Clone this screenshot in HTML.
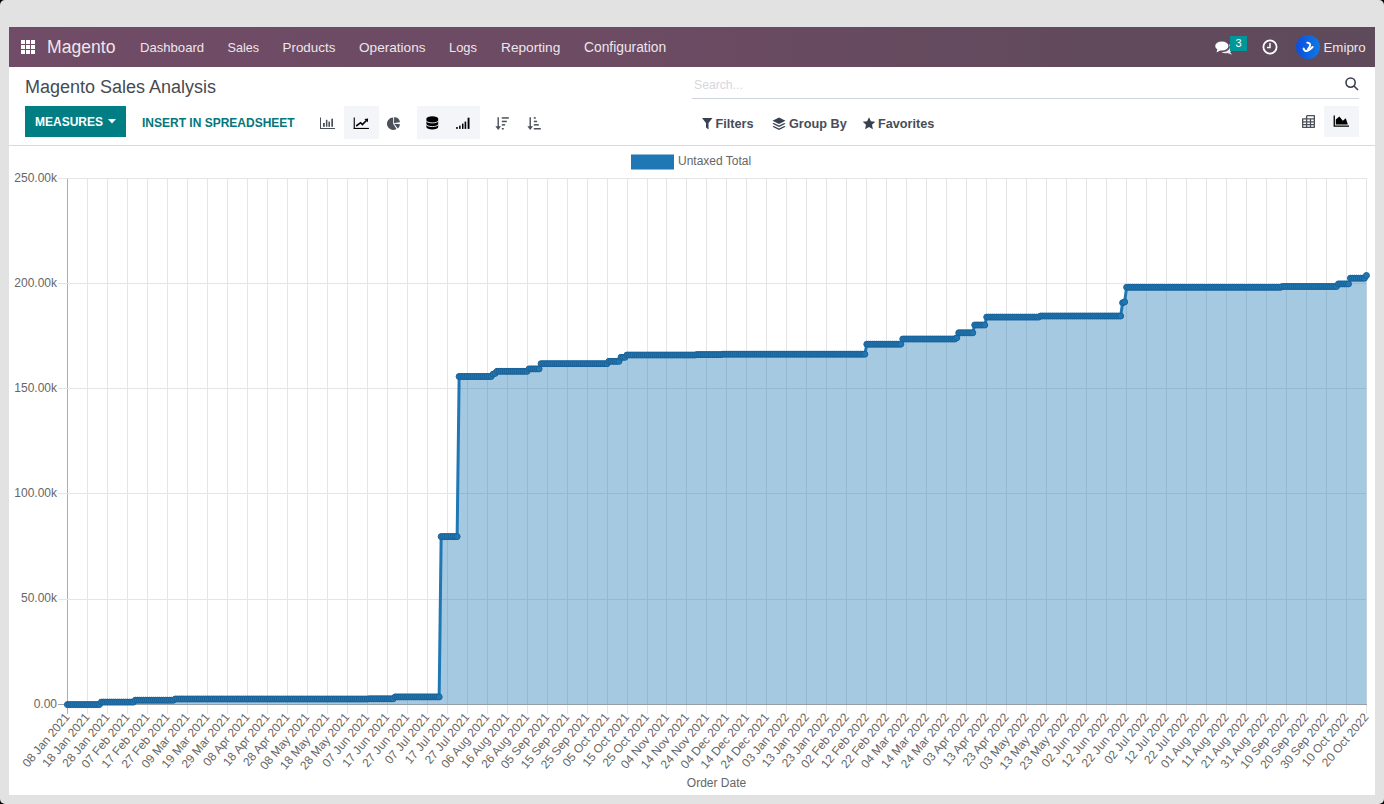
<!DOCTYPE html>
<html><head><meta charset="utf-8">
<style>
*{box-sizing:border-box;margin:0;padding:0}
html,body{width:1384px;height:804px;overflow:hidden;background:#000;font-family:"Liberation Sans",sans-serif}
.abs{position:absolute}
#screen{position:absolute;left:9px;top:27px;width:1366px;height:768px;background:#fff;overflow:hidden}
#nav{position:absolute;left:9px;top:27px;width:1366px;height:40px;background:linear-gradient(90deg,#714b67 0%,#6c4b63 45%,#614a5c 80%,#5f4a5b 100%)}
.nv{position:absolute;top:41px;color:#ede6eb;font-size:13.5px;line-height:14px;white-space:nowrap}
.chart{position:absolute;left:0;top:0}
.tk{font-family:"Liberation Sans",sans-serif;font-size:12px;fill:#666}
.fb{position:absolute;margin-top:1px;font-size:12.7px;line-height:13px;font-weight:bold;color:#484d56;white-space:nowrap}
.corner{position:absolute;width:0;height:0}
</style></head><body>
<div id="frame" style="position:absolute;left:0;top:0;width:1384px;height:804px;background:#e2e2e2;border-radius:5px"></div>
<div id="screen"></div>
<div id="nav"></div>
<!-- grid icon -->
<svg class="abs" style="left:21px;top:40px" width="14" height="14" viewBox="0 0 14 14"><g fill="#fff">
<rect x="0" y="0" width="4" height="4"/><rect x="5" y="0" width="4" height="4"/><rect x="10" y="0" width="4" height="4"/>
<rect x="0" y="5" width="4" height="4"/><rect x="5" y="5" width="4" height="4"/><rect x="10" y="5" width="4" height="4"/>
<rect x="0" y="10" width="4" height="4"/><rect x="5" y="10" width="4" height="4"/><rect x="10" y="10" width="4" height="4"/>
</g></svg>
<div class="nv" style="left:47px;top:38.3px;font-size:17.6px;line-height:18px">Magento</div>
<div class="nv" style="left:140px;font-size:13.1px">Dashboard</div>
<div class="nv" style="left:227.5px;font-size:12.6px">Sales</div>
<div class="nv" style="left:282.5px;font-size:13.4px">Products</div>
<div class="nv" style="left:359px;font-size:13.6px">Operations</div>
<div class="nv" style="left:449px;font-size:12.9px">Logs</div>
<div class="nv" style="left:501px;font-size:13.7px">Reporting</div>
<div class="nv" style="left:584px;font-size:13.8px">Configuration</div>
<div class="nv" style="left:1323.5px;font-size:13.3px">Emipro</div>

<div class="abs" style="left:25px;top:77px;font-size:18px;line-height:20px;color:#464a53">Magento Sales Analysis</div>
<div class="abs" style="left:25px;top:106px;width:101px;height:31px;background:#017e84"></div>
<div class="abs" style="left:35px;top:116px;font-size:12px;line-height:12px;font-weight:bold;color:#fff">MEASURES</div>
<div class="abs" style="left:142px;top:117px;font-size:12px;line-height:12px;font-weight:bold;color:#04767c">INSERT IN SPREADSHEET</div>
<div class="abs" style="left:9px;top:145px;width:1366px;height:1px;background:#d8dadd"></div>

<!-- measures caret -->
<svg class="abs" style="left:108px;top:119px" width="8" height="5" viewBox="0 0 8 5"><path d="M0 0 L8 0 L4 4.5 Z" fill="#fff"/></svg>
<!-- graph type icons -->
<div class="abs" style="left:344px;top:106px;width:35px;height:33px;background:#f4f5f8"></div>
<div class="abs" style="left:417px;top:106px;width:63px;height:33px;background:#f4f5f8"></div>
<svg class="abs" style="left:319px;top:117px" width="17" height="13" viewBox="0 0 17 13"><g fill="#4b5059">
<rect x="1" y="0.5" width="1" height="11.5"/><rect x="1" y="11" width="15" height="1"/>
<rect x="4" y="6" width="1.8" height="3.8"/><rect x="6.9" y="2.8" width="1.5" height="7"/><rect x="9.4" y="4.6" width="1.6" height="5.2"/><rect x="12.3" y="1.7" width="1.7" height="8.1"/>
</g></svg>
<svg class="abs" style="left:353px;top:117px" width="17" height="13" viewBox="0 0 17 13"><g fill="#000">
<rect x="0.7" y="0.5" width="1.1" height="11.4"/><rect x="0.7" y="10.9" width="15.2" height="1.1"/>
<path d="M11.4 1.9 L15.1 1.5 L14.8 5.2 Z"/></g>
<polyline points="3.2,9 7.6,5.7 9.4,7.5 13.6,3.2" fill="none" stroke="#000" stroke-width="1.6" stroke-linejoin="miter"/></svg>
<svg class="abs" style="left:387px;top:117px" width="14" height="14" viewBox="0 0 14 14"><g fill="#4b5059"><path d="M6.20 6.80 L9.49 12.06 A6.2 6.2 0 1 1 6.20 0.60 Z"/><path d="M7.00 6.10 L7.21 0.10 A6.0 6.0 0 0 1 12.94 5.26 Z"/><path d="M7.10 6.70 L13.07 7.33 A6.0 6.0 0 0 1 10.79 11.43 Z"/></g></svg>
<svg class="abs" style="left:426px;top:116px" width="13" height="14" viewBox="0 0 13 14"><path d="M0.4 2.6 A5.9 2.3 0 0 1 12.2 2.6 V11 A5.9 2.4 0 0 1 0.4 11 Z" fill="#000"/>
<g fill="none" stroke="#f4f5f8" stroke-width="0.9"><path d="M0.2 4.6 A6.1 2.3 0 0 0 12.4 4.6"/><path d="M0.2 8.3 A6.1 2.3 0 0 0 12.4 8.3"/></g></svg>
<svg class="abs" style="left:456px;top:117px" width="14" height="13" viewBox="0 0 14 13"><g fill="#000">
<rect x="0.2" y="10" width="1.6" height="1.9"/><rect x="3.1" y="8.6" width="1.5" height="3.3"/><rect x="6" y="6.6" width="1.5" height="5.3"/><rect x="8.6" y="4.6" width="1.6" height="7.3"/><rect x="11.6" y="0.7" width="1.9" height="11.2"/></g></svg>
<svg class="abs" style="left:495px;top:116px" width="15" height="15" viewBox="0 0 15 15"><g fill="#4b5059">
<path d="M2.5 1.2 H3.9 V10.2 H6 L3.2 13.9 L0.4 10.2 H2.5 Z"/><rect x="6.8" y="1.2" width="7" height="1.5"/><rect x="6.8" y="4.7" width="5" height="1.5"/><rect x="6.8" y="8.1" width="3.3" height="1.5"/><rect x="6.8" y="12" width="2" height="1.5"/></g></svg>
<svg class="abs" style="left:527px;top:116px" width="15" height="15" viewBox="0 0 15 15"><g fill="#4b5059">
<path d="M2.5 1.2 H3.9 V10.2 H6 L3.2 13.9 L0.4 10.2 H2.5 Z"/><rect x="6.8" y="1.2" width="2" height="1.5"/><rect x="6.8" y="4.7" width="3.3" height="1.5"/><rect x="6.8" y="8.1" width="5" height="1.5"/><rect x="6.8" y="12" width="7" height="1.5"/></g></svg>

<!-- search -->
<div class="abs" style="left:694px;top:78px;font-size:12.2px;line-height:14px;color:#d5d7dc">Search...</div>
<div class="abs" style="left:692px;top:98px;width:667px;height:1px;background:#ced4da"></div>
<svg class="abs" style="left:1345px;top:77px" width="14" height="14" viewBox="0 0 14 14"><g fill="none" stroke="#374151" stroke-width="1.6"><circle cx="5.6" cy="5.6" r="4.6"/><path d="M9 9 L13 13"/></g></svg>
<!-- filters -->
<svg class="abs" style="left:702px;top:118px" width="11" height="12" viewBox="0 0 11 12"><path d="M0 0 H10.5 L6.5 5 V11.5 L4 9.5 V5 Z" fill="#374151"/></svg>
<div class="abs fb" style="left:715.5px;top:117px">Filters</div>
<svg class="abs" style="left:772px;top:117px" width="14" height="14" viewBox="0 0 14 14"><g fill="#374151"><path d="M7 0.5 L13.5 3.8 L7 7.1 L0.5 3.8 Z"/><path d="M1.8 6 L7 8.6 L12.2 6 L13.5 6.8 L7 10.1 L0.5 6.8 Z"/><path d="M1.8 9 L7 11.6 L12.2 9 L13.5 9.8 L7 13.1 L0.5 9.8 Z"/></g></svg>
<div class="abs fb" style="left:789px;top:117px">Group By</div>
<svg class="abs" style="left:862px;top:117px" width="14" height="13" viewBox="0 0 14 13"><path d="M7 0.3 L8.9 4.3 L13.3 4.8 L10 7.8 L10.9 12.2 L7 10 L3.1 12.2 L4 7.8 L0.7 4.8 L5.1 4.3 Z" fill="#374151"/></svg>
<div class="abs fb" style="left:878px;top:117px">Favorites</div>
<!-- view switch -->
<div class="abs" style="left:1324px;top:106px;width:35px;height:31px;background:#f4f5f8"></div>
<svg class="abs" style="left:1302px;top:114.5px" width="14" height="14" viewBox="0 0 14 14"><g fill="none" stroke="#4b5059" stroke-width="1.3" stroke-linejoin="round"><path d="M4.6 0.65 H12.35 V12.35 H0.65 V3.9 H12.35 M4.6 0.65 V12.35 M8.5 3.9 V12.35 M0.65 6.9 H12.35 M0.65 9.6 H12.35"/></g></svg>
<svg class="abs" style="left:1333px;top:115px" width="17" height="13" viewBox="0 0 17 13"><g fill="#000"><path d="M0.6 0.5 H1.9 V10.5 H16 V11.8 H0.6 Z"/><path d="M2.8 9.4 V4.5 L6.4 1.6 L9.8 5.8 L12.8 3.2 L14.8 9.4 Z"/></g></svg>

<!-- systray -->
<svg class="abs" style="left:1215px;top:40.5px" width="18" height="14" viewBox="0 0 18 14"><g fill="#fff"><ellipse cx="6.8" cy="5" rx="6.6" ry="4.6"/><path d="M2.5 8 L1.5 11.5 L6 9 Z"/><path d="M13.6 3.3 A6 4.6 0 0 1 15 11 L17 13.8 L12.5 12 A6 4.6 0 0 1 6.5 11 A7 5 0 0 0 13.6 3.3 Z" opacity="0.9"/></g></svg>
<div class="abs" style="left:1230px;top:36px;width:17px;height:15px;background:#01969a;color:#fff;font-size:11px;line-height:15px;text-align:center">3</div>
<svg class="abs" style="left:1262px;top:39px" width="16" height="16" viewBox="0 0 16 16"><circle cx="8" cy="8" r="6.6" fill="none" stroke="#fff" stroke-width="1.8"/><path d="M8 4 V8.6 H5" fill="none" stroke="#fff" stroke-width="1.5"/></svg>
<svg class="abs" style="left:1296px;top:35px" width="24" height="24" viewBox="0 0 24 24"><defs><linearGradient id="av" x1="0" x2="1" y1="0" y2="0"><stop offset="0" stop-color="#0b4fe0"/><stop offset="1" stop-color="#1179e0"/></linearGradient></defs><circle cx="12" cy="12" r="12" fill="url(#av)"/><g fill="none" stroke="#fff" stroke-linecap="round"><path d="M11.2 7.6 Q16.8 8.4 12 14" stroke-width="1.9"/><path d="M7.6 13.6 Q9 19 16.6 12" stroke-width="2"/></g></svg>
<svg class="chart" width="1384" height="804" viewBox="0 0 1384 804">
<g shape-rendering="crispEdges"><line x1="67.50" y1="178.20" x2="67.50" y2="714" stroke="#adadad" stroke-width="1"/><line x1="87.50" y1="178.20" x2="87.50" y2="714" stroke="#e5e5e5" stroke-width="1"/><line x1="107.50" y1="178.20" x2="107.50" y2="714" stroke="#e5e5e5" stroke-width="1"/><line x1="127.50" y1="178.20" x2="127.50" y2="714" stroke="#e5e5e5" stroke-width="1"/><line x1="147.50" y1="178.20" x2="147.50" y2="714" stroke="#e5e5e5" stroke-width="1"/><line x1="167.50" y1="178.20" x2="167.50" y2="714" stroke="#e5e5e5" stroke-width="1"/><line x1="187.50" y1="178.20" x2="187.50" y2="714" stroke="#e5e5e5" stroke-width="1"/><line x1="207.50" y1="178.20" x2="207.50" y2="714" stroke="#e5e5e5" stroke-width="1"/><line x1="227.50" y1="178.20" x2="227.50" y2="714" stroke="#e5e5e5" stroke-width="1"/><line x1="247.50" y1="178.20" x2="247.50" y2="714" stroke="#e5e5e5" stroke-width="1"/><line x1="267.50" y1="178.20" x2="267.50" y2="714" stroke="#e5e5e5" stroke-width="1"/><line x1="287.50" y1="178.20" x2="287.50" y2="714" stroke="#e5e5e5" stroke-width="1"/><line x1="307.50" y1="178.20" x2="307.50" y2="714" stroke="#e5e5e5" stroke-width="1"/><line x1="327.50" y1="178.20" x2="327.50" y2="714" stroke="#e5e5e5" stroke-width="1"/><line x1="347.50" y1="178.20" x2="347.50" y2="714" stroke="#e5e5e5" stroke-width="1"/><line x1="367.50" y1="178.20" x2="367.50" y2="714" stroke="#e5e5e5" stroke-width="1"/><line x1="387.50" y1="178.20" x2="387.50" y2="714" stroke="#e5e5e5" stroke-width="1"/><line x1="407.50" y1="178.20" x2="407.50" y2="714" stroke="#e5e5e5" stroke-width="1"/><line x1="427.50" y1="178.20" x2="427.50" y2="714" stroke="#e5e5e5" stroke-width="1"/><line x1="447.50" y1="178.20" x2="447.50" y2="714" stroke="#e5e5e5" stroke-width="1"/><line x1="467.50" y1="178.20" x2="467.50" y2="714" stroke="#e5e5e5" stroke-width="1"/><line x1="487.50" y1="178.20" x2="487.50" y2="714" stroke="#e5e5e5" stroke-width="1"/><line x1="507.50" y1="178.20" x2="507.50" y2="714" stroke="#e5e5e5" stroke-width="1"/><line x1="527.50" y1="178.20" x2="527.50" y2="714" stroke="#e5e5e5" stroke-width="1"/><line x1="547.50" y1="178.20" x2="547.50" y2="714" stroke="#e5e5e5" stroke-width="1"/><line x1="567.50" y1="178.20" x2="567.50" y2="714" stroke="#e5e5e5" stroke-width="1"/><line x1="587.50" y1="178.20" x2="587.50" y2="714" stroke="#e5e5e5" stroke-width="1"/><line x1="607.50" y1="178.20" x2="607.50" y2="714" stroke="#e5e5e5" stroke-width="1"/><line x1="627.50" y1="178.20" x2="627.50" y2="714" stroke="#e5e5e5" stroke-width="1"/><line x1="647.50" y1="178.20" x2="647.50" y2="714" stroke="#e5e5e5" stroke-width="1"/><line x1="666.50" y1="178.20" x2="666.50" y2="714" stroke="#e5e5e5" stroke-width="1"/><line x1="686.50" y1="178.20" x2="686.50" y2="714" stroke="#e5e5e5" stroke-width="1"/><line x1="706.50" y1="178.20" x2="706.50" y2="714" stroke="#e5e5e5" stroke-width="1"/><line x1="726.50" y1="178.20" x2="726.50" y2="714" stroke="#e5e5e5" stroke-width="1"/><line x1="746.50" y1="178.20" x2="746.50" y2="714" stroke="#e5e5e5" stroke-width="1"/><line x1="766.50" y1="178.20" x2="766.50" y2="714" stroke="#e5e5e5" stroke-width="1"/><line x1="786.50" y1="178.20" x2="786.50" y2="714" stroke="#e5e5e5" stroke-width="1"/><line x1="806.50" y1="178.20" x2="806.50" y2="714" stroke="#e5e5e5" stroke-width="1"/><line x1="826.50" y1="178.20" x2="826.50" y2="714" stroke="#e5e5e5" stroke-width="1"/><line x1="846.50" y1="178.20" x2="846.50" y2="714" stroke="#e5e5e5" stroke-width="1"/><line x1="866.50" y1="178.20" x2="866.50" y2="714" stroke="#e5e5e5" stroke-width="1"/><line x1="886.50" y1="178.20" x2="886.50" y2="714" stroke="#e5e5e5" stroke-width="1"/><line x1="906.50" y1="178.20" x2="906.50" y2="714" stroke="#e5e5e5" stroke-width="1"/><line x1="926.50" y1="178.20" x2="926.50" y2="714" stroke="#e5e5e5" stroke-width="1"/><line x1="946.50" y1="178.20" x2="946.50" y2="714" stroke="#e5e5e5" stroke-width="1"/><line x1="966.50" y1="178.20" x2="966.50" y2="714" stroke="#e5e5e5" stroke-width="1"/><line x1="986.50" y1="178.20" x2="986.50" y2="714" stroke="#e5e5e5" stroke-width="1"/><line x1="1006.50" y1="178.20" x2="1006.50" y2="714" stroke="#e5e5e5" stroke-width="1"/><line x1="1026.50" y1="178.20" x2="1026.50" y2="714" stroke="#e5e5e5" stroke-width="1"/><line x1="1046.50" y1="178.20" x2="1046.50" y2="714" stroke="#e5e5e5" stroke-width="1"/><line x1="1066.50" y1="178.20" x2="1066.50" y2="714" stroke="#e5e5e5" stroke-width="1"/><line x1="1086.50" y1="178.20" x2="1086.50" y2="714" stroke="#e5e5e5" stroke-width="1"/><line x1="1106.50" y1="178.20" x2="1106.50" y2="714" stroke="#e5e5e5" stroke-width="1"/><line x1="1126.50" y1="178.20" x2="1126.50" y2="714" stroke="#e5e5e5" stroke-width="1"/><line x1="1146.50" y1="178.20" x2="1146.50" y2="714" stroke="#e5e5e5" stroke-width="1"/><line x1="1166.50" y1="178.20" x2="1166.50" y2="714" stroke="#e5e5e5" stroke-width="1"/><line x1="1186.50" y1="178.20" x2="1186.50" y2="714" stroke="#e5e5e5" stroke-width="1"/><line x1="1206.50" y1="178.20" x2="1206.50" y2="714" stroke="#e5e5e5" stroke-width="1"/><line x1="1226.50" y1="178.20" x2="1226.50" y2="714" stroke="#e5e5e5" stroke-width="1"/><line x1="1246.50" y1="178.20" x2="1246.50" y2="714" stroke="#e5e5e5" stroke-width="1"/><line x1="1266.50" y1="178.20" x2="1266.50" y2="714" stroke="#e5e5e5" stroke-width="1"/><line x1="1286.50" y1="178.20" x2="1286.50" y2="714" stroke="#e5e5e5" stroke-width="1"/><line x1="1306.50" y1="178.20" x2="1306.50" y2="714" stroke="#e5e5e5" stroke-width="1"/><line x1="1326.50" y1="178.20" x2="1326.50" y2="714" stroke="#e5e5e5" stroke-width="1"/><line x1="1346.50" y1="178.20" x2="1346.50" y2="714" stroke="#e5e5e5" stroke-width="1"/><line x1="1366.50" y1="178.20" x2="1366.50" y2="714" stroke="#e5e5e5" stroke-width="1"/><line x1="57.5" y1="178.20" x2="1366.5" y2="178.20" stroke="#e5e5e5" stroke-width="1"/><line x1="57.5" y1="283.42" x2="1366.5" y2="283.42" stroke="#e5e5e5" stroke-width="1"/><line x1="57.5" y1="388.64" x2="1366.5" y2="388.64" stroke="#e5e5e5" stroke-width="1"/><line x1="57.5" y1="493.86" x2="1366.5" y2="493.86" stroke="#e5e5e5" stroke-width="1"/><line x1="57.5" y1="599.08" x2="1366.5" y2="599.08" stroke="#e5e5e5" stroke-width="1"/><line x1="57.5" y1="704.30" x2="1366.5" y2="704.30" stroke="#a3a3a3" stroke-width="1"/></g>
<text x="57" y="181.50" text-anchor="end" class="tk">250.00k</text>
<text x="57" y="286.72" text-anchor="end" class="tk">200.00k</text>
<text x="57" y="391.94" text-anchor="end" class="tk">150.00k</text>
<text x="57" y="497.16" text-anchor="end" class="tk">100.00k</text>
<text x="57" y="602.38" text-anchor="end" class="tk">50.00k</text>
<text x="57" y="707.60" text-anchor="end" class="tk">0.00</text>
<path d="M67.44,704.60 L69.44,704.60 L71.44,704.60 L73.44,704.60 L75.44,704.60 L77.44,704.60 L79.43,704.60 L81.43,704.60 L83.43,704.60 L85.43,704.60 L87.43,704.60 L89.43,704.60 L91.42,704.60 L93.42,704.60 L95.42,704.60 L97.42,704.60 L99.42,704.60 L101.42,702.10 L103.42,702.10 L105.41,702.10 L107.41,702.10 L109.41,702.10 L111.41,702.10 L113.41,702.10 L115.41,702.10 L117.40,702.10 L119.40,702.10 L121.40,702.10 L123.40,702.10 L125.40,702.10 L127.40,702.10 L129.40,702.10 L131.39,702.10 L133.39,702.10 L135.39,700.20 L137.39,700.20 L139.39,700.20 L141.39,700.20 L143.38,700.20 L145.38,700.20 L147.38,700.20 L149.38,700.20 L151.38,700.20 L153.38,700.20 L155.38,700.20 L157.37,700.20 L159.37,700.20 L161.37,700.20 L163.37,700.20 L165.37,700.20 L167.37,700.20 L169.36,700.20 L171.36,700.20 L173.36,700.20 L175.36,699.00 L177.36,699.00 L179.36,699.00 L181.36,699.00 L183.35,699.00 L185.35,699.00 L187.35,699.00 L189.35,699.00 L191.35,699.00 L193.35,699.00 L195.34,699.00 L197.34,699.00 L199.34,699.00 L201.34,699.00 L203.34,699.00 L205.34,699.00 L207.34,699.00 L209.33,699.00 L211.33,699.00 L213.33,699.00 L215.33,699.00 L217.33,699.00 L219.33,699.00 L221.32,699.00 L223.32,699.00 L225.32,699.00 L227.32,699.00 L229.32,699.00 L231.32,699.00 L233.32,699.00 L235.31,699.00 L237.31,699.00 L239.31,699.00 L241.31,699.00 L243.31,699.00 L245.31,699.00 L247.30,699.00 L249.30,699.00 L251.30,699.00 L253.30,699.00 L255.30,699.00 L257.30,699.00 L259.30,699.00 L261.29,699.00 L263.29,699.00 L265.29,699.00 L267.29,699.00 L269.29,699.00 L271.29,699.00 L273.28,699.00 L275.28,699.00 L277.28,699.00 L279.28,699.00 L281.28,699.00 L283.28,699.00 L285.28,699.00 L287.27,699.00 L289.27,699.00 L291.27,699.00 L293.27,699.00 L295.27,699.00 L297.27,699.00 L299.26,699.00 L301.26,699.00 L303.26,699.00 L305.26,699.00 L307.26,699.00 L309.26,699.00 L311.26,699.00 L313.25,699.00 L315.25,699.00 L317.25,699.00 L319.25,699.00 L321.25,699.00 L323.25,699.00 L325.24,699.00 L327.24,699.00 L329.24,699.00 L331.24,699.00 L333.24,699.00 L335.24,699.00 L337.24,699.00 L339.23,699.00 L341.23,699.00 L343.23,699.00 L345.23,699.00 L347.23,699.00 L349.23,699.00 L351.22,699.00 L353.22,699.00 L355.22,699.00 L357.22,699.00 L359.22,699.00 L361.22,699.00 L363.22,699.00 L365.21,699.00 L367.21,699.00 L369.21,698.80 L371.21,698.80 L373.21,698.80 L375.21,698.80 L377.20,698.80 L379.20,698.80 L381.20,698.80 L383.20,698.80 L385.20,698.80 L387.20,698.80 L389.20,698.80 L391.19,698.80 L393.19,698.80 L395.19,696.90 L397.19,696.90 L399.19,696.90 L401.19,696.90 L403.18,696.90 L405.18,696.90 L407.18,696.90 L409.18,696.90 L411.18,696.90 L413.18,696.90 L415.18,696.90 L417.17,696.90 L419.17,696.90 L421.17,696.90 L423.17,696.90 L425.17,696.90 L427.17,696.90 L429.16,696.90 L431.16,696.90 L433.16,696.90 L435.16,696.90 L437.16,696.90 L439.16,696.90 L441.16,536.60 L443.15,536.60 L445.15,536.60 L447.15,536.60 L449.15,536.60 L451.15,536.60 L453.15,536.60 L455.14,536.60 L457.14,536.60 L459.14,376.50 L461.14,376.50 L463.14,376.50 L465.14,376.50 L467.14,376.50 L469.13,376.50 L471.13,376.50 L473.13,376.50 L475.13,376.50 L477.13,376.50 L479.13,376.50 L481.12,376.50 L483.12,376.50 L485.12,376.50 L487.12,376.50 L489.12,376.50 L491.12,376.50 L493.12,374.20 L495.11,373.40 L497.11,371.30 L499.11,371.30 L501.11,371.30 L503.11,371.30 L505.11,371.30 L507.10,371.30 L509.10,371.30 L511.10,371.30 L513.10,371.30 L515.10,371.30 L517.10,371.30 L519.10,371.30 L521.09,371.30 L523.09,371.30 L525.09,371.30 L527.09,371.30 L529.09,368.90 L531.09,368.90 L533.08,368.90 L535.08,368.90 L537.08,368.90 L539.08,368.90 L541.08,363.70 L543.08,363.70 L545.08,363.70 L547.07,363.70 L549.07,363.70 L551.07,363.70 L553.07,363.70 L555.07,363.70 L557.07,363.70 L559.06,363.70 L561.06,363.70 L563.06,363.70 L565.06,363.70 L567.06,363.70 L569.06,363.70 L571.06,363.70 L573.05,363.70 L575.05,363.70 L577.05,363.70 L579.05,363.70 L581.05,363.70 L583.05,363.70 L585.04,363.70 L587.04,363.70 L589.04,363.70 L591.04,363.70 L593.04,363.70 L595.04,363.70 L597.04,363.70 L599.03,363.70 L601.03,363.70 L603.03,363.70 L605.03,363.70 L607.03,363.70 L609.03,361.30 L611.02,361.30 L613.02,361.30 L615.02,361.30 L617.02,361.30 L619.02,361.30 L621.02,357.30 L623.02,357.30 L625.01,357.30 L627.01,355.00 L629.01,355.00 L631.01,355.00 L633.01,355.00 L635.01,355.00 L637.00,355.00 L639.00,355.00 L641.00,355.00 L643.00,355.00 L645.00,355.00 L647.00,355.00 L649.00,355.00 L650.99,355.00 L652.99,355.00 L654.99,355.00 L656.99,355.00 L658.99,355.00 L660.99,355.00 L662.98,355.00 L664.98,355.00 L666.98,355.00 L668.98,355.00 L670.98,355.00 L672.98,355.00 L674.98,355.00 L676.97,355.00 L678.97,355.00 L680.97,355.00 L682.97,355.00 L684.97,355.00 L686.97,355.00 L688.96,355.00 L690.96,355.00 L692.96,355.00 L694.96,355.00 L696.96,354.60 L698.96,354.60 L700.96,354.60 L702.95,354.60 L704.95,354.60 L706.95,354.60 L708.95,354.60 L710.95,354.60 L712.95,354.60 L714.94,354.60 L716.94,354.60 L718.94,354.60 L720.94,354.60 L722.94,354.20 L724.94,354.20 L726.94,354.20 L728.93,354.20 L730.93,354.20 L732.93,354.20 L734.93,354.20 L736.93,354.20 L738.93,354.20 L740.92,354.20 L742.92,354.20 L744.92,354.20 L746.92,354.20 L748.92,354.20 L750.92,354.20 L752.92,354.20 L754.91,354.20 L756.91,354.20 L758.91,354.20 L760.91,354.20 L762.91,354.20 L764.91,354.20 L766.90,354.20 L768.90,354.20 L770.90,354.20 L772.90,354.20 L774.90,354.20 L776.90,354.20 L778.90,354.20 L780.89,354.20 L782.89,354.20 L784.89,354.20 L786.89,354.20 L788.89,354.20 L790.89,354.20 L792.88,354.20 L794.88,354.20 L796.88,354.20 L798.88,354.20 L800.88,354.20 L802.88,354.20 L804.88,354.20 L806.87,354.20 L808.87,354.20 L810.87,354.20 L812.87,354.20 L814.87,354.20 L816.87,354.20 L818.86,354.20 L820.86,354.20 L822.86,354.20 L824.86,354.20 L826.86,354.20 L828.86,354.20 L830.86,354.20 L832.85,354.20 L834.85,354.20 L836.85,354.20 L838.85,354.20 L840.85,354.20 L842.85,354.20 L844.84,354.20 L846.84,354.20 L848.84,354.20 L850.84,354.20 L852.84,354.20 L854.84,354.20 L856.84,354.20 L858.83,354.20 L860.83,354.20 L862.83,354.20 L864.83,354.20 L866.83,344.20 L868.83,344.20 L870.82,344.20 L872.82,344.20 L874.82,344.20 L876.82,344.20 L878.82,344.20 L880.82,344.20 L882.82,344.20 L884.81,344.20 L886.81,344.20 L888.81,344.20 L890.81,344.20 L892.81,344.20 L894.81,344.20 L896.80,344.20 L898.80,344.20 L900.80,344.20 L902.80,339.00 L904.80,339.00 L906.80,339.00 L908.80,339.00 L910.79,339.00 L912.79,339.00 L914.79,339.00 L916.79,339.00 L918.79,339.00 L920.79,339.00 L922.78,339.00 L924.78,339.00 L926.78,339.00 L928.78,339.00 L930.78,339.00 L932.78,339.00 L934.78,339.00 L936.77,339.00 L938.77,339.00 L940.77,339.00 L942.77,339.00 L944.77,339.00 L946.77,339.00 L948.76,339.00 L950.76,339.00 L952.76,339.00 L954.76,339.00 L956.76,337.80 L958.76,332.80 L960.76,332.80 L962.75,332.80 L964.75,332.80 L966.75,332.80 L968.75,332.80 L970.75,332.80 L972.75,332.80 L974.74,325.00 L976.74,325.00 L978.74,325.00 L980.74,325.00 L982.74,325.00 L984.74,325.00 L986.74,317.10 L988.73,317.10 L990.73,317.10 L992.73,317.10 L994.73,317.10 L996.73,317.10 L998.73,317.10 L1000.72,317.10 L1002.72,317.10 L1004.72,317.10 L1006.72,317.10 L1008.72,317.10 L1010.72,317.10 L1012.72,317.10 L1014.71,317.10 L1016.71,317.10 L1018.71,317.10 L1020.71,317.10 L1022.71,317.10 L1024.71,317.10 L1026.70,317.10 L1028.70,317.10 L1030.70,317.10 L1032.70,317.10 L1034.70,317.10 L1036.70,317.10 L1038.70,317.10 L1040.69,316.00 L1042.69,316.00 L1044.69,316.00 L1046.69,316.00 L1048.69,316.00 L1050.69,316.00 L1052.68,316.00 L1054.68,316.00 L1056.68,316.00 L1058.68,316.00 L1060.68,316.00 L1062.68,316.00 L1064.68,316.00 L1066.67,316.00 L1068.67,316.00 L1070.67,316.00 L1072.67,316.00 L1074.67,316.00 L1076.67,316.00 L1078.66,316.00 L1080.66,316.00 L1082.66,316.00 L1084.66,316.00 L1086.66,316.00 L1088.66,316.00 L1090.66,316.00 L1092.65,316.00 L1094.65,316.00 L1096.65,316.00 L1098.65,316.00 L1100.65,316.00 L1102.65,316.00 L1104.64,316.00 L1106.64,316.00 L1108.64,316.00 L1110.64,316.00 L1112.64,316.00 L1114.64,316.00 L1116.64,316.00 L1118.63,316.00 L1120.63,316.00 L1122.63,302.80 L1124.63,301.90 L1126.63,287.30 L1128.63,287.30 L1130.62,287.30 L1132.62,287.30 L1134.62,287.30 L1136.62,287.30 L1138.62,287.30 L1140.62,287.30 L1142.62,287.30 L1144.61,287.30 L1146.61,287.30 L1148.61,287.30 L1150.61,287.30 L1152.61,287.30 L1154.61,287.30 L1156.60,287.30 L1158.60,287.30 L1160.60,287.30 L1162.60,287.30 L1164.60,287.30 L1166.60,287.30 L1168.60,287.30 L1170.59,287.30 L1172.59,287.30 L1174.59,287.30 L1176.59,287.30 L1178.59,287.30 L1180.59,287.30 L1182.58,287.30 L1184.58,287.30 L1186.58,287.30 L1188.58,287.30 L1190.58,287.30 L1192.58,287.30 L1194.58,287.30 L1196.57,287.30 L1198.57,287.30 L1200.57,287.30 L1202.57,287.30 L1204.57,287.30 L1206.57,287.30 L1208.56,287.30 L1210.56,287.30 L1212.56,287.30 L1214.56,287.30 L1216.56,287.30 L1218.56,287.30 L1220.56,287.30 L1222.55,287.30 L1224.55,287.30 L1226.55,287.30 L1228.55,287.30 L1230.55,287.30 L1232.55,287.30 L1234.54,287.30 L1236.54,287.30 L1238.54,287.30 L1240.54,287.30 L1242.54,287.30 L1244.54,287.30 L1246.54,287.30 L1248.53,287.30 L1250.53,287.30 L1252.53,287.30 L1254.53,287.30 L1256.53,287.30 L1258.53,287.30 L1260.52,287.30 L1262.52,287.30 L1264.52,287.30 L1266.52,287.30 L1268.52,287.30 L1270.52,287.30 L1272.52,287.30 L1274.51,287.30 L1276.51,287.30 L1278.51,287.30 L1280.51,287.30 L1282.51,286.50 L1284.51,286.50 L1286.50,286.50 L1288.50,286.50 L1290.50,286.50 L1292.50,286.50 L1294.50,286.50 L1296.50,286.50 L1298.50,286.50 L1300.49,286.50 L1302.49,286.50 L1304.49,286.50 L1306.49,286.50 L1308.49,286.50 L1310.49,286.50 L1312.48,286.50 L1314.48,286.50 L1316.48,286.50 L1318.48,286.50 L1320.48,286.50 L1322.48,286.50 L1324.48,286.50 L1326.47,286.50 L1328.47,286.50 L1330.47,286.50 L1332.47,286.50 L1334.47,286.50 L1336.47,286.50 L1338.46,283.90 L1340.46,283.90 L1342.46,283.90 L1344.46,283.90 L1346.46,283.90 L1348.46,283.90 L1350.46,278.20 L1352.45,278.20 L1354.45,278.20 L1356.45,278.20 L1358.45,278.20 L1360.45,278.20 L1362.45,278.20 L1364.44,278.20 L1366.44,275.50 L1366.44,704.30 L67.44,704.30 Z" fill="rgba(31,119,180,0.4)" stroke="none"/>
<path d="M67.44,704.60 L69.44,704.60 L71.44,704.60 L73.44,704.60 L75.44,704.60 L77.44,704.60 L79.43,704.60 L81.43,704.60 L83.43,704.60 L85.43,704.60 L87.43,704.60 L89.43,704.60 L91.42,704.60 L93.42,704.60 L95.42,704.60 L97.42,704.60 L99.42,704.60 L101.42,702.10 L103.42,702.10 L105.41,702.10 L107.41,702.10 L109.41,702.10 L111.41,702.10 L113.41,702.10 L115.41,702.10 L117.40,702.10 L119.40,702.10 L121.40,702.10 L123.40,702.10 L125.40,702.10 L127.40,702.10 L129.40,702.10 L131.39,702.10 L133.39,702.10 L135.39,700.20 L137.39,700.20 L139.39,700.20 L141.39,700.20 L143.38,700.20 L145.38,700.20 L147.38,700.20 L149.38,700.20 L151.38,700.20 L153.38,700.20 L155.38,700.20 L157.37,700.20 L159.37,700.20 L161.37,700.20 L163.37,700.20 L165.37,700.20 L167.37,700.20 L169.36,700.20 L171.36,700.20 L173.36,700.20 L175.36,699.00 L177.36,699.00 L179.36,699.00 L181.36,699.00 L183.35,699.00 L185.35,699.00 L187.35,699.00 L189.35,699.00 L191.35,699.00 L193.35,699.00 L195.34,699.00 L197.34,699.00 L199.34,699.00 L201.34,699.00 L203.34,699.00 L205.34,699.00 L207.34,699.00 L209.33,699.00 L211.33,699.00 L213.33,699.00 L215.33,699.00 L217.33,699.00 L219.33,699.00 L221.32,699.00 L223.32,699.00 L225.32,699.00 L227.32,699.00 L229.32,699.00 L231.32,699.00 L233.32,699.00 L235.31,699.00 L237.31,699.00 L239.31,699.00 L241.31,699.00 L243.31,699.00 L245.31,699.00 L247.30,699.00 L249.30,699.00 L251.30,699.00 L253.30,699.00 L255.30,699.00 L257.30,699.00 L259.30,699.00 L261.29,699.00 L263.29,699.00 L265.29,699.00 L267.29,699.00 L269.29,699.00 L271.29,699.00 L273.28,699.00 L275.28,699.00 L277.28,699.00 L279.28,699.00 L281.28,699.00 L283.28,699.00 L285.28,699.00 L287.27,699.00 L289.27,699.00 L291.27,699.00 L293.27,699.00 L295.27,699.00 L297.27,699.00 L299.26,699.00 L301.26,699.00 L303.26,699.00 L305.26,699.00 L307.26,699.00 L309.26,699.00 L311.26,699.00 L313.25,699.00 L315.25,699.00 L317.25,699.00 L319.25,699.00 L321.25,699.00 L323.25,699.00 L325.24,699.00 L327.24,699.00 L329.24,699.00 L331.24,699.00 L333.24,699.00 L335.24,699.00 L337.24,699.00 L339.23,699.00 L341.23,699.00 L343.23,699.00 L345.23,699.00 L347.23,699.00 L349.23,699.00 L351.22,699.00 L353.22,699.00 L355.22,699.00 L357.22,699.00 L359.22,699.00 L361.22,699.00 L363.22,699.00 L365.21,699.00 L367.21,699.00 L369.21,698.80 L371.21,698.80 L373.21,698.80 L375.21,698.80 L377.20,698.80 L379.20,698.80 L381.20,698.80 L383.20,698.80 L385.20,698.80 L387.20,698.80 L389.20,698.80 L391.19,698.80 L393.19,698.80 L395.19,696.90 L397.19,696.90 L399.19,696.90 L401.19,696.90 L403.18,696.90 L405.18,696.90 L407.18,696.90 L409.18,696.90 L411.18,696.90 L413.18,696.90 L415.18,696.90 L417.17,696.90 L419.17,696.90 L421.17,696.90 L423.17,696.90 L425.17,696.90 L427.17,696.90 L429.16,696.90 L431.16,696.90 L433.16,696.90 L435.16,696.90 L437.16,696.90 L439.16,696.90 L441.16,536.60 L443.15,536.60 L445.15,536.60 L447.15,536.60 L449.15,536.60 L451.15,536.60 L453.15,536.60 L455.14,536.60 L457.14,536.60 L459.14,376.50 L461.14,376.50 L463.14,376.50 L465.14,376.50 L467.14,376.50 L469.13,376.50 L471.13,376.50 L473.13,376.50 L475.13,376.50 L477.13,376.50 L479.13,376.50 L481.12,376.50 L483.12,376.50 L485.12,376.50 L487.12,376.50 L489.12,376.50 L491.12,376.50 L493.12,374.20 L495.11,373.40 L497.11,371.30 L499.11,371.30 L501.11,371.30 L503.11,371.30 L505.11,371.30 L507.10,371.30 L509.10,371.30 L511.10,371.30 L513.10,371.30 L515.10,371.30 L517.10,371.30 L519.10,371.30 L521.09,371.30 L523.09,371.30 L525.09,371.30 L527.09,371.30 L529.09,368.90 L531.09,368.90 L533.08,368.90 L535.08,368.90 L537.08,368.90 L539.08,368.90 L541.08,363.70 L543.08,363.70 L545.08,363.70 L547.07,363.70 L549.07,363.70 L551.07,363.70 L553.07,363.70 L555.07,363.70 L557.07,363.70 L559.06,363.70 L561.06,363.70 L563.06,363.70 L565.06,363.70 L567.06,363.70 L569.06,363.70 L571.06,363.70 L573.05,363.70 L575.05,363.70 L577.05,363.70 L579.05,363.70 L581.05,363.70 L583.05,363.70 L585.04,363.70 L587.04,363.70 L589.04,363.70 L591.04,363.70 L593.04,363.70 L595.04,363.70 L597.04,363.70 L599.03,363.70 L601.03,363.70 L603.03,363.70 L605.03,363.70 L607.03,363.70 L609.03,361.30 L611.02,361.30 L613.02,361.30 L615.02,361.30 L617.02,361.30 L619.02,361.30 L621.02,357.30 L623.02,357.30 L625.01,357.30 L627.01,355.00 L629.01,355.00 L631.01,355.00 L633.01,355.00 L635.01,355.00 L637.00,355.00 L639.00,355.00 L641.00,355.00 L643.00,355.00 L645.00,355.00 L647.00,355.00 L649.00,355.00 L650.99,355.00 L652.99,355.00 L654.99,355.00 L656.99,355.00 L658.99,355.00 L660.99,355.00 L662.98,355.00 L664.98,355.00 L666.98,355.00 L668.98,355.00 L670.98,355.00 L672.98,355.00 L674.98,355.00 L676.97,355.00 L678.97,355.00 L680.97,355.00 L682.97,355.00 L684.97,355.00 L686.97,355.00 L688.96,355.00 L690.96,355.00 L692.96,355.00 L694.96,355.00 L696.96,354.60 L698.96,354.60 L700.96,354.60 L702.95,354.60 L704.95,354.60 L706.95,354.60 L708.95,354.60 L710.95,354.60 L712.95,354.60 L714.94,354.60 L716.94,354.60 L718.94,354.60 L720.94,354.60 L722.94,354.20 L724.94,354.20 L726.94,354.20 L728.93,354.20 L730.93,354.20 L732.93,354.20 L734.93,354.20 L736.93,354.20 L738.93,354.20 L740.92,354.20 L742.92,354.20 L744.92,354.20 L746.92,354.20 L748.92,354.20 L750.92,354.20 L752.92,354.20 L754.91,354.20 L756.91,354.20 L758.91,354.20 L760.91,354.20 L762.91,354.20 L764.91,354.20 L766.90,354.20 L768.90,354.20 L770.90,354.20 L772.90,354.20 L774.90,354.20 L776.90,354.20 L778.90,354.20 L780.89,354.20 L782.89,354.20 L784.89,354.20 L786.89,354.20 L788.89,354.20 L790.89,354.20 L792.88,354.20 L794.88,354.20 L796.88,354.20 L798.88,354.20 L800.88,354.20 L802.88,354.20 L804.88,354.20 L806.87,354.20 L808.87,354.20 L810.87,354.20 L812.87,354.20 L814.87,354.20 L816.87,354.20 L818.86,354.20 L820.86,354.20 L822.86,354.20 L824.86,354.20 L826.86,354.20 L828.86,354.20 L830.86,354.20 L832.85,354.20 L834.85,354.20 L836.85,354.20 L838.85,354.20 L840.85,354.20 L842.85,354.20 L844.84,354.20 L846.84,354.20 L848.84,354.20 L850.84,354.20 L852.84,354.20 L854.84,354.20 L856.84,354.20 L858.83,354.20 L860.83,354.20 L862.83,354.20 L864.83,354.20 L866.83,344.20 L868.83,344.20 L870.82,344.20 L872.82,344.20 L874.82,344.20 L876.82,344.20 L878.82,344.20 L880.82,344.20 L882.82,344.20 L884.81,344.20 L886.81,344.20 L888.81,344.20 L890.81,344.20 L892.81,344.20 L894.81,344.20 L896.80,344.20 L898.80,344.20 L900.80,344.20 L902.80,339.00 L904.80,339.00 L906.80,339.00 L908.80,339.00 L910.79,339.00 L912.79,339.00 L914.79,339.00 L916.79,339.00 L918.79,339.00 L920.79,339.00 L922.78,339.00 L924.78,339.00 L926.78,339.00 L928.78,339.00 L930.78,339.00 L932.78,339.00 L934.78,339.00 L936.77,339.00 L938.77,339.00 L940.77,339.00 L942.77,339.00 L944.77,339.00 L946.77,339.00 L948.76,339.00 L950.76,339.00 L952.76,339.00 L954.76,339.00 L956.76,337.80 L958.76,332.80 L960.76,332.80 L962.75,332.80 L964.75,332.80 L966.75,332.80 L968.75,332.80 L970.75,332.80 L972.75,332.80 L974.74,325.00 L976.74,325.00 L978.74,325.00 L980.74,325.00 L982.74,325.00 L984.74,325.00 L986.74,317.10 L988.73,317.10 L990.73,317.10 L992.73,317.10 L994.73,317.10 L996.73,317.10 L998.73,317.10 L1000.72,317.10 L1002.72,317.10 L1004.72,317.10 L1006.72,317.10 L1008.72,317.10 L1010.72,317.10 L1012.72,317.10 L1014.71,317.10 L1016.71,317.10 L1018.71,317.10 L1020.71,317.10 L1022.71,317.10 L1024.71,317.10 L1026.70,317.10 L1028.70,317.10 L1030.70,317.10 L1032.70,317.10 L1034.70,317.10 L1036.70,317.10 L1038.70,317.10 L1040.69,316.00 L1042.69,316.00 L1044.69,316.00 L1046.69,316.00 L1048.69,316.00 L1050.69,316.00 L1052.68,316.00 L1054.68,316.00 L1056.68,316.00 L1058.68,316.00 L1060.68,316.00 L1062.68,316.00 L1064.68,316.00 L1066.67,316.00 L1068.67,316.00 L1070.67,316.00 L1072.67,316.00 L1074.67,316.00 L1076.67,316.00 L1078.66,316.00 L1080.66,316.00 L1082.66,316.00 L1084.66,316.00 L1086.66,316.00 L1088.66,316.00 L1090.66,316.00 L1092.65,316.00 L1094.65,316.00 L1096.65,316.00 L1098.65,316.00 L1100.65,316.00 L1102.65,316.00 L1104.64,316.00 L1106.64,316.00 L1108.64,316.00 L1110.64,316.00 L1112.64,316.00 L1114.64,316.00 L1116.64,316.00 L1118.63,316.00 L1120.63,316.00 L1122.63,302.80 L1124.63,301.90 L1126.63,287.30 L1128.63,287.30 L1130.62,287.30 L1132.62,287.30 L1134.62,287.30 L1136.62,287.30 L1138.62,287.30 L1140.62,287.30 L1142.62,287.30 L1144.61,287.30 L1146.61,287.30 L1148.61,287.30 L1150.61,287.30 L1152.61,287.30 L1154.61,287.30 L1156.60,287.30 L1158.60,287.30 L1160.60,287.30 L1162.60,287.30 L1164.60,287.30 L1166.60,287.30 L1168.60,287.30 L1170.59,287.30 L1172.59,287.30 L1174.59,287.30 L1176.59,287.30 L1178.59,287.30 L1180.59,287.30 L1182.58,287.30 L1184.58,287.30 L1186.58,287.30 L1188.58,287.30 L1190.58,287.30 L1192.58,287.30 L1194.58,287.30 L1196.57,287.30 L1198.57,287.30 L1200.57,287.30 L1202.57,287.30 L1204.57,287.30 L1206.57,287.30 L1208.56,287.30 L1210.56,287.30 L1212.56,287.30 L1214.56,287.30 L1216.56,287.30 L1218.56,287.30 L1220.56,287.30 L1222.55,287.30 L1224.55,287.30 L1226.55,287.30 L1228.55,287.30 L1230.55,287.30 L1232.55,287.30 L1234.54,287.30 L1236.54,287.30 L1238.54,287.30 L1240.54,287.30 L1242.54,287.30 L1244.54,287.30 L1246.54,287.30 L1248.53,287.30 L1250.53,287.30 L1252.53,287.30 L1254.53,287.30 L1256.53,287.30 L1258.53,287.30 L1260.52,287.30 L1262.52,287.30 L1264.52,287.30 L1266.52,287.30 L1268.52,287.30 L1270.52,287.30 L1272.52,287.30 L1274.51,287.30 L1276.51,287.30 L1278.51,287.30 L1280.51,287.30 L1282.51,286.50 L1284.51,286.50 L1286.50,286.50 L1288.50,286.50 L1290.50,286.50 L1292.50,286.50 L1294.50,286.50 L1296.50,286.50 L1298.50,286.50 L1300.49,286.50 L1302.49,286.50 L1304.49,286.50 L1306.49,286.50 L1308.49,286.50 L1310.49,286.50 L1312.48,286.50 L1314.48,286.50 L1316.48,286.50 L1318.48,286.50 L1320.48,286.50 L1322.48,286.50 L1324.48,286.50 L1326.47,286.50 L1328.47,286.50 L1330.47,286.50 L1332.47,286.50 L1334.47,286.50 L1336.47,286.50 L1338.46,283.90 L1340.46,283.90 L1342.46,283.90 L1344.46,283.90 L1346.46,283.90 L1348.46,283.90 L1350.46,278.20 L1352.45,278.20 L1354.45,278.20 L1356.45,278.20 L1358.45,278.20 L1360.45,278.20 L1362.45,278.20 L1364.44,278.20 L1366.44,275.50" fill="none" stroke="#1f77b4" stroke-width="3" stroke-linejoin="round"/>
<g fill="#1f77b4" stroke="#1a6299" stroke-width="1"><circle cx="67.44" cy="704.60" r="3"/><circle cx="69.44" cy="704.60" r="3"/><circle cx="71.44" cy="704.60" r="3"/><circle cx="73.44" cy="704.60" r="3"/><circle cx="75.44" cy="704.60" r="3"/><circle cx="77.44" cy="704.60" r="3"/><circle cx="79.43" cy="704.60" r="3"/><circle cx="81.43" cy="704.60" r="3"/><circle cx="83.43" cy="704.60" r="3"/><circle cx="85.43" cy="704.60" r="3"/><circle cx="87.43" cy="704.60" r="3"/><circle cx="89.43" cy="704.60" r="3"/><circle cx="91.42" cy="704.60" r="3"/><circle cx="93.42" cy="704.60" r="3"/><circle cx="95.42" cy="704.60" r="3"/><circle cx="97.42" cy="704.60" r="3"/><circle cx="99.42" cy="704.60" r="3"/><circle cx="101.42" cy="702.10" r="3"/><circle cx="103.42" cy="702.10" r="3"/><circle cx="105.41" cy="702.10" r="3"/><circle cx="107.41" cy="702.10" r="3"/><circle cx="109.41" cy="702.10" r="3"/><circle cx="111.41" cy="702.10" r="3"/><circle cx="113.41" cy="702.10" r="3"/><circle cx="115.41" cy="702.10" r="3"/><circle cx="117.40" cy="702.10" r="3"/><circle cx="119.40" cy="702.10" r="3"/><circle cx="121.40" cy="702.10" r="3"/><circle cx="123.40" cy="702.10" r="3"/><circle cx="125.40" cy="702.10" r="3"/><circle cx="127.40" cy="702.10" r="3"/><circle cx="129.40" cy="702.10" r="3"/><circle cx="131.39" cy="702.10" r="3"/><circle cx="133.39" cy="702.10" r="3"/><circle cx="135.39" cy="700.20" r="3"/><circle cx="137.39" cy="700.20" r="3"/><circle cx="139.39" cy="700.20" r="3"/><circle cx="141.39" cy="700.20" r="3"/><circle cx="143.38" cy="700.20" r="3"/><circle cx="145.38" cy="700.20" r="3"/><circle cx="147.38" cy="700.20" r="3"/><circle cx="149.38" cy="700.20" r="3"/><circle cx="151.38" cy="700.20" r="3"/><circle cx="153.38" cy="700.20" r="3"/><circle cx="155.38" cy="700.20" r="3"/><circle cx="157.37" cy="700.20" r="3"/><circle cx="159.37" cy="700.20" r="3"/><circle cx="161.37" cy="700.20" r="3"/><circle cx="163.37" cy="700.20" r="3"/><circle cx="165.37" cy="700.20" r="3"/><circle cx="167.37" cy="700.20" r="3"/><circle cx="169.36" cy="700.20" r="3"/><circle cx="171.36" cy="700.20" r="3"/><circle cx="173.36" cy="700.20" r="3"/><circle cx="175.36" cy="699.00" r="3"/><circle cx="177.36" cy="699.00" r="3"/><circle cx="179.36" cy="699.00" r="3"/><circle cx="181.36" cy="699.00" r="3"/><circle cx="183.35" cy="699.00" r="3"/><circle cx="185.35" cy="699.00" r="3"/><circle cx="187.35" cy="699.00" r="3"/><circle cx="189.35" cy="699.00" r="3"/><circle cx="191.35" cy="699.00" r="3"/><circle cx="193.35" cy="699.00" r="3"/><circle cx="195.34" cy="699.00" r="3"/><circle cx="197.34" cy="699.00" r="3"/><circle cx="199.34" cy="699.00" r="3"/><circle cx="201.34" cy="699.00" r="3"/><circle cx="203.34" cy="699.00" r="3"/><circle cx="205.34" cy="699.00" r="3"/><circle cx="207.34" cy="699.00" r="3"/><circle cx="209.33" cy="699.00" r="3"/><circle cx="211.33" cy="699.00" r="3"/><circle cx="213.33" cy="699.00" r="3"/><circle cx="215.33" cy="699.00" r="3"/><circle cx="217.33" cy="699.00" r="3"/><circle cx="219.33" cy="699.00" r="3"/><circle cx="221.32" cy="699.00" r="3"/><circle cx="223.32" cy="699.00" r="3"/><circle cx="225.32" cy="699.00" r="3"/><circle cx="227.32" cy="699.00" r="3"/><circle cx="229.32" cy="699.00" r="3"/><circle cx="231.32" cy="699.00" r="3"/><circle cx="233.32" cy="699.00" r="3"/><circle cx="235.31" cy="699.00" r="3"/><circle cx="237.31" cy="699.00" r="3"/><circle cx="239.31" cy="699.00" r="3"/><circle cx="241.31" cy="699.00" r="3"/><circle cx="243.31" cy="699.00" r="3"/><circle cx="245.31" cy="699.00" r="3"/><circle cx="247.30" cy="699.00" r="3"/><circle cx="249.30" cy="699.00" r="3"/><circle cx="251.30" cy="699.00" r="3"/><circle cx="253.30" cy="699.00" r="3"/><circle cx="255.30" cy="699.00" r="3"/><circle cx="257.30" cy="699.00" r="3"/><circle cx="259.30" cy="699.00" r="3"/><circle cx="261.29" cy="699.00" r="3"/><circle cx="263.29" cy="699.00" r="3"/><circle cx="265.29" cy="699.00" r="3"/><circle cx="267.29" cy="699.00" r="3"/><circle cx="269.29" cy="699.00" r="3"/><circle cx="271.29" cy="699.00" r="3"/><circle cx="273.28" cy="699.00" r="3"/><circle cx="275.28" cy="699.00" r="3"/><circle cx="277.28" cy="699.00" r="3"/><circle cx="279.28" cy="699.00" r="3"/><circle cx="281.28" cy="699.00" r="3"/><circle cx="283.28" cy="699.00" r="3"/><circle cx="285.28" cy="699.00" r="3"/><circle cx="287.27" cy="699.00" r="3"/><circle cx="289.27" cy="699.00" r="3"/><circle cx="291.27" cy="699.00" r="3"/><circle cx="293.27" cy="699.00" r="3"/><circle cx="295.27" cy="699.00" r="3"/><circle cx="297.27" cy="699.00" r="3"/><circle cx="299.26" cy="699.00" r="3"/><circle cx="301.26" cy="699.00" r="3"/><circle cx="303.26" cy="699.00" r="3"/><circle cx="305.26" cy="699.00" r="3"/><circle cx="307.26" cy="699.00" r="3"/><circle cx="309.26" cy="699.00" r="3"/><circle cx="311.26" cy="699.00" r="3"/><circle cx="313.25" cy="699.00" r="3"/><circle cx="315.25" cy="699.00" r="3"/><circle cx="317.25" cy="699.00" r="3"/><circle cx="319.25" cy="699.00" r="3"/><circle cx="321.25" cy="699.00" r="3"/><circle cx="323.25" cy="699.00" r="3"/><circle cx="325.24" cy="699.00" r="3"/><circle cx="327.24" cy="699.00" r="3"/><circle cx="329.24" cy="699.00" r="3"/><circle cx="331.24" cy="699.00" r="3"/><circle cx="333.24" cy="699.00" r="3"/><circle cx="335.24" cy="699.00" r="3"/><circle cx="337.24" cy="699.00" r="3"/><circle cx="339.23" cy="699.00" r="3"/><circle cx="341.23" cy="699.00" r="3"/><circle cx="343.23" cy="699.00" r="3"/><circle cx="345.23" cy="699.00" r="3"/><circle cx="347.23" cy="699.00" r="3"/><circle cx="349.23" cy="699.00" r="3"/><circle cx="351.22" cy="699.00" r="3"/><circle cx="353.22" cy="699.00" r="3"/><circle cx="355.22" cy="699.00" r="3"/><circle cx="357.22" cy="699.00" r="3"/><circle cx="359.22" cy="699.00" r="3"/><circle cx="361.22" cy="699.00" r="3"/><circle cx="363.22" cy="699.00" r="3"/><circle cx="365.21" cy="699.00" r="3"/><circle cx="367.21" cy="699.00" r="3"/><circle cx="369.21" cy="698.80" r="3"/><circle cx="371.21" cy="698.80" r="3"/><circle cx="373.21" cy="698.80" r="3"/><circle cx="375.21" cy="698.80" r="3"/><circle cx="377.20" cy="698.80" r="3"/><circle cx="379.20" cy="698.80" r="3"/><circle cx="381.20" cy="698.80" r="3"/><circle cx="383.20" cy="698.80" r="3"/><circle cx="385.20" cy="698.80" r="3"/><circle cx="387.20" cy="698.80" r="3"/><circle cx="389.20" cy="698.80" r="3"/><circle cx="391.19" cy="698.80" r="3"/><circle cx="393.19" cy="698.80" r="3"/><circle cx="395.19" cy="696.90" r="3"/><circle cx="397.19" cy="696.90" r="3"/><circle cx="399.19" cy="696.90" r="3"/><circle cx="401.19" cy="696.90" r="3"/><circle cx="403.18" cy="696.90" r="3"/><circle cx="405.18" cy="696.90" r="3"/><circle cx="407.18" cy="696.90" r="3"/><circle cx="409.18" cy="696.90" r="3"/><circle cx="411.18" cy="696.90" r="3"/><circle cx="413.18" cy="696.90" r="3"/><circle cx="415.18" cy="696.90" r="3"/><circle cx="417.17" cy="696.90" r="3"/><circle cx="419.17" cy="696.90" r="3"/><circle cx="421.17" cy="696.90" r="3"/><circle cx="423.17" cy="696.90" r="3"/><circle cx="425.17" cy="696.90" r="3"/><circle cx="427.17" cy="696.90" r="3"/><circle cx="429.16" cy="696.90" r="3"/><circle cx="431.16" cy="696.90" r="3"/><circle cx="433.16" cy="696.90" r="3"/><circle cx="435.16" cy="696.90" r="3"/><circle cx="437.16" cy="696.90" r="3"/><circle cx="439.16" cy="696.90" r="3"/><circle cx="441.16" cy="536.60" r="3"/><circle cx="443.15" cy="536.60" r="3"/><circle cx="445.15" cy="536.60" r="3"/><circle cx="447.15" cy="536.60" r="3"/><circle cx="449.15" cy="536.60" r="3"/><circle cx="451.15" cy="536.60" r="3"/><circle cx="453.15" cy="536.60" r="3"/><circle cx="455.14" cy="536.60" r="3"/><circle cx="457.14" cy="536.60" r="3"/><circle cx="459.14" cy="376.50" r="3"/><circle cx="461.14" cy="376.50" r="3"/><circle cx="463.14" cy="376.50" r="3"/><circle cx="465.14" cy="376.50" r="3"/><circle cx="467.14" cy="376.50" r="3"/><circle cx="469.13" cy="376.50" r="3"/><circle cx="471.13" cy="376.50" r="3"/><circle cx="473.13" cy="376.50" r="3"/><circle cx="475.13" cy="376.50" r="3"/><circle cx="477.13" cy="376.50" r="3"/><circle cx="479.13" cy="376.50" r="3"/><circle cx="481.12" cy="376.50" r="3"/><circle cx="483.12" cy="376.50" r="3"/><circle cx="485.12" cy="376.50" r="3"/><circle cx="487.12" cy="376.50" r="3"/><circle cx="489.12" cy="376.50" r="3"/><circle cx="491.12" cy="376.50" r="3"/><circle cx="493.12" cy="374.20" r="3"/><circle cx="495.11" cy="373.40" r="3"/><circle cx="497.11" cy="371.30" r="3"/><circle cx="499.11" cy="371.30" r="3"/><circle cx="501.11" cy="371.30" r="3"/><circle cx="503.11" cy="371.30" r="3"/><circle cx="505.11" cy="371.30" r="3"/><circle cx="507.10" cy="371.30" r="3"/><circle cx="509.10" cy="371.30" r="3"/><circle cx="511.10" cy="371.30" r="3"/><circle cx="513.10" cy="371.30" r="3"/><circle cx="515.10" cy="371.30" r="3"/><circle cx="517.10" cy="371.30" r="3"/><circle cx="519.10" cy="371.30" r="3"/><circle cx="521.09" cy="371.30" r="3"/><circle cx="523.09" cy="371.30" r="3"/><circle cx="525.09" cy="371.30" r="3"/><circle cx="527.09" cy="371.30" r="3"/><circle cx="529.09" cy="368.90" r="3"/><circle cx="531.09" cy="368.90" r="3"/><circle cx="533.08" cy="368.90" r="3"/><circle cx="535.08" cy="368.90" r="3"/><circle cx="537.08" cy="368.90" r="3"/><circle cx="539.08" cy="368.90" r="3"/><circle cx="541.08" cy="363.70" r="3"/><circle cx="543.08" cy="363.70" r="3"/><circle cx="545.08" cy="363.70" r="3"/><circle cx="547.07" cy="363.70" r="3"/><circle cx="549.07" cy="363.70" r="3"/><circle cx="551.07" cy="363.70" r="3"/><circle cx="553.07" cy="363.70" r="3"/><circle cx="555.07" cy="363.70" r="3"/><circle cx="557.07" cy="363.70" r="3"/><circle cx="559.06" cy="363.70" r="3"/><circle cx="561.06" cy="363.70" r="3"/><circle cx="563.06" cy="363.70" r="3"/><circle cx="565.06" cy="363.70" r="3"/><circle cx="567.06" cy="363.70" r="3"/><circle cx="569.06" cy="363.70" r="3"/><circle cx="571.06" cy="363.70" r="3"/><circle cx="573.05" cy="363.70" r="3"/><circle cx="575.05" cy="363.70" r="3"/><circle cx="577.05" cy="363.70" r="3"/><circle cx="579.05" cy="363.70" r="3"/><circle cx="581.05" cy="363.70" r="3"/><circle cx="583.05" cy="363.70" r="3"/><circle cx="585.04" cy="363.70" r="3"/><circle cx="587.04" cy="363.70" r="3"/><circle cx="589.04" cy="363.70" r="3"/><circle cx="591.04" cy="363.70" r="3"/><circle cx="593.04" cy="363.70" r="3"/><circle cx="595.04" cy="363.70" r="3"/><circle cx="597.04" cy="363.70" r="3"/><circle cx="599.03" cy="363.70" r="3"/><circle cx="601.03" cy="363.70" r="3"/><circle cx="603.03" cy="363.70" r="3"/><circle cx="605.03" cy="363.70" r="3"/><circle cx="607.03" cy="363.70" r="3"/><circle cx="609.03" cy="361.30" r="3"/><circle cx="611.02" cy="361.30" r="3"/><circle cx="613.02" cy="361.30" r="3"/><circle cx="615.02" cy="361.30" r="3"/><circle cx="617.02" cy="361.30" r="3"/><circle cx="619.02" cy="361.30" r="3"/><circle cx="621.02" cy="357.30" r="3"/><circle cx="623.02" cy="357.30" r="3"/><circle cx="625.01" cy="357.30" r="3"/><circle cx="627.01" cy="355.00" r="3"/><circle cx="629.01" cy="355.00" r="3"/><circle cx="631.01" cy="355.00" r="3"/><circle cx="633.01" cy="355.00" r="3"/><circle cx="635.01" cy="355.00" r="3"/><circle cx="637.00" cy="355.00" r="3"/><circle cx="639.00" cy="355.00" r="3"/><circle cx="641.00" cy="355.00" r="3"/><circle cx="643.00" cy="355.00" r="3"/><circle cx="645.00" cy="355.00" r="3"/><circle cx="647.00" cy="355.00" r="3"/><circle cx="649.00" cy="355.00" r="3"/><circle cx="650.99" cy="355.00" r="3"/><circle cx="652.99" cy="355.00" r="3"/><circle cx="654.99" cy="355.00" r="3"/><circle cx="656.99" cy="355.00" r="3"/><circle cx="658.99" cy="355.00" r="3"/><circle cx="660.99" cy="355.00" r="3"/><circle cx="662.98" cy="355.00" r="3"/><circle cx="664.98" cy="355.00" r="3"/><circle cx="666.98" cy="355.00" r="3"/><circle cx="668.98" cy="355.00" r="3"/><circle cx="670.98" cy="355.00" r="3"/><circle cx="672.98" cy="355.00" r="3"/><circle cx="674.98" cy="355.00" r="3"/><circle cx="676.97" cy="355.00" r="3"/><circle cx="678.97" cy="355.00" r="3"/><circle cx="680.97" cy="355.00" r="3"/><circle cx="682.97" cy="355.00" r="3"/><circle cx="684.97" cy="355.00" r="3"/><circle cx="686.97" cy="355.00" r="3"/><circle cx="688.96" cy="355.00" r="3"/><circle cx="690.96" cy="355.00" r="3"/><circle cx="692.96" cy="355.00" r="3"/><circle cx="694.96" cy="355.00" r="3"/><circle cx="696.96" cy="354.60" r="3"/><circle cx="698.96" cy="354.60" r="3"/><circle cx="700.96" cy="354.60" r="3"/><circle cx="702.95" cy="354.60" r="3"/><circle cx="704.95" cy="354.60" r="3"/><circle cx="706.95" cy="354.60" r="3"/><circle cx="708.95" cy="354.60" r="3"/><circle cx="710.95" cy="354.60" r="3"/><circle cx="712.95" cy="354.60" r="3"/><circle cx="714.94" cy="354.60" r="3"/><circle cx="716.94" cy="354.60" r="3"/><circle cx="718.94" cy="354.60" r="3"/><circle cx="720.94" cy="354.60" r="3"/><circle cx="722.94" cy="354.20" r="3"/><circle cx="724.94" cy="354.20" r="3"/><circle cx="726.94" cy="354.20" r="3"/><circle cx="728.93" cy="354.20" r="3"/><circle cx="730.93" cy="354.20" r="3"/><circle cx="732.93" cy="354.20" r="3"/><circle cx="734.93" cy="354.20" r="3"/><circle cx="736.93" cy="354.20" r="3"/><circle cx="738.93" cy="354.20" r="3"/><circle cx="740.92" cy="354.20" r="3"/><circle cx="742.92" cy="354.20" r="3"/><circle cx="744.92" cy="354.20" r="3"/><circle cx="746.92" cy="354.20" r="3"/><circle cx="748.92" cy="354.20" r="3"/><circle cx="750.92" cy="354.20" r="3"/><circle cx="752.92" cy="354.20" r="3"/><circle cx="754.91" cy="354.20" r="3"/><circle cx="756.91" cy="354.20" r="3"/><circle cx="758.91" cy="354.20" r="3"/><circle cx="760.91" cy="354.20" r="3"/><circle cx="762.91" cy="354.20" r="3"/><circle cx="764.91" cy="354.20" r="3"/><circle cx="766.90" cy="354.20" r="3"/><circle cx="768.90" cy="354.20" r="3"/><circle cx="770.90" cy="354.20" r="3"/><circle cx="772.90" cy="354.20" r="3"/><circle cx="774.90" cy="354.20" r="3"/><circle cx="776.90" cy="354.20" r="3"/><circle cx="778.90" cy="354.20" r="3"/><circle cx="780.89" cy="354.20" r="3"/><circle cx="782.89" cy="354.20" r="3"/><circle cx="784.89" cy="354.20" r="3"/><circle cx="786.89" cy="354.20" r="3"/><circle cx="788.89" cy="354.20" r="3"/><circle cx="790.89" cy="354.20" r="3"/><circle cx="792.88" cy="354.20" r="3"/><circle cx="794.88" cy="354.20" r="3"/><circle cx="796.88" cy="354.20" r="3"/><circle cx="798.88" cy="354.20" r="3"/><circle cx="800.88" cy="354.20" r="3"/><circle cx="802.88" cy="354.20" r="3"/><circle cx="804.88" cy="354.20" r="3"/><circle cx="806.87" cy="354.20" r="3"/><circle cx="808.87" cy="354.20" r="3"/><circle cx="810.87" cy="354.20" r="3"/><circle cx="812.87" cy="354.20" r="3"/><circle cx="814.87" cy="354.20" r="3"/><circle cx="816.87" cy="354.20" r="3"/><circle cx="818.86" cy="354.20" r="3"/><circle cx="820.86" cy="354.20" r="3"/><circle cx="822.86" cy="354.20" r="3"/><circle cx="824.86" cy="354.20" r="3"/><circle cx="826.86" cy="354.20" r="3"/><circle cx="828.86" cy="354.20" r="3"/><circle cx="830.86" cy="354.20" r="3"/><circle cx="832.85" cy="354.20" r="3"/><circle cx="834.85" cy="354.20" r="3"/><circle cx="836.85" cy="354.20" r="3"/><circle cx="838.85" cy="354.20" r="3"/><circle cx="840.85" cy="354.20" r="3"/><circle cx="842.85" cy="354.20" r="3"/><circle cx="844.84" cy="354.20" r="3"/><circle cx="846.84" cy="354.20" r="3"/><circle cx="848.84" cy="354.20" r="3"/><circle cx="850.84" cy="354.20" r="3"/><circle cx="852.84" cy="354.20" r="3"/><circle cx="854.84" cy="354.20" r="3"/><circle cx="856.84" cy="354.20" r="3"/><circle cx="858.83" cy="354.20" r="3"/><circle cx="860.83" cy="354.20" r="3"/><circle cx="862.83" cy="354.20" r="3"/><circle cx="864.83" cy="354.20" r="3"/><circle cx="866.83" cy="344.20" r="3"/><circle cx="868.83" cy="344.20" r="3"/><circle cx="870.82" cy="344.20" r="3"/><circle cx="872.82" cy="344.20" r="3"/><circle cx="874.82" cy="344.20" r="3"/><circle cx="876.82" cy="344.20" r="3"/><circle cx="878.82" cy="344.20" r="3"/><circle cx="880.82" cy="344.20" r="3"/><circle cx="882.82" cy="344.20" r="3"/><circle cx="884.81" cy="344.20" r="3"/><circle cx="886.81" cy="344.20" r="3"/><circle cx="888.81" cy="344.20" r="3"/><circle cx="890.81" cy="344.20" r="3"/><circle cx="892.81" cy="344.20" r="3"/><circle cx="894.81" cy="344.20" r="3"/><circle cx="896.80" cy="344.20" r="3"/><circle cx="898.80" cy="344.20" r="3"/><circle cx="900.80" cy="344.20" r="3"/><circle cx="902.80" cy="339.00" r="3"/><circle cx="904.80" cy="339.00" r="3"/><circle cx="906.80" cy="339.00" r="3"/><circle cx="908.80" cy="339.00" r="3"/><circle cx="910.79" cy="339.00" r="3"/><circle cx="912.79" cy="339.00" r="3"/><circle cx="914.79" cy="339.00" r="3"/><circle cx="916.79" cy="339.00" r="3"/><circle cx="918.79" cy="339.00" r="3"/><circle cx="920.79" cy="339.00" r="3"/><circle cx="922.78" cy="339.00" r="3"/><circle cx="924.78" cy="339.00" r="3"/><circle cx="926.78" cy="339.00" r="3"/><circle cx="928.78" cy="339.00" r="3"/><circle cx="930.78" cy="339.00" r="3"/><circle cx="932.78" cy="339.00" r="3"/><circle cx="934.78" cy="339.00" r="3"/><circle cx="936.77" cy="339.00" r="3"/><circle cx="938.77" cy="339.00" r="3"/><circle cx="940.77" cy="339.00" r="3"/><circle cx="942.77" cy="339.00" r="3"/><circle cx="944.77" cy="339.00" r="3"/><circle cx="946.77" cy="339.00" r="3"/><circle cx="948.76" cy="339.00" r="3"/><circle cx="950.76" cy="339.00" r="3"/><circle cx="952.76" cy="339.00" r="3"/><circle cx="954.76" cy="339.00" r="3"/><circle cx="956.76" cy="337.80" r="3"/><circle cx="958.76" cy="332.80" r="3"/><circle cx="960.76" cy="332.80" r="3"/><circle cx="962.75" cy="332.80" r="3"/><circle cx="964.75" cy="332.80" r="3"/><circle cx="966.75" cy="332.80" r="3"/><circle cx="968.75" cy="332.80" r="3"/><circle cx="970.75" cy="332.80" r="3"/><circle cx="972.75" cy="332.80" r="3"/><circle cx="974.74" cy="325.00" r="3"/><circle cx="976.74" cy="325.00" r="3"/><circle cx="978.74" cy="325.00" r="3"/><circle cx="980.74" cy="325.00" r="3"/><circle cx="982.74" cy="325.00" r="3"/><circle cx="984.74" cy="325.00" r="3"/><circle cx="986.74" cy="317.10" r="3"/><circle cx="988.73" cy="317.10" r="3"/><circle cx="990.73" cy="317.10" r="3"/><circle cx="992.73" cy="317.10" r="3"/><circle cx="994.73" cy="317.10" r="3"/><circle cx="996.73" cy="317.10" r="3"/><circle cx="998.73" cy="317.10" r="3"/><circle cx="1000.72" cy="317.10" r="3"/><circle cx="1002.72" cy="317.10" r="3"/><circle cx="1004.72" cy="317.10" r="3"/><circle cx="1006.72" cy="317.10" r="3"/><circle cx="1008.72" cy="317.10" r="3"/><circle cx="1010.72" cy="317.10" r="3"/><circle cx="1012.72" cy="317.10" r="3"/><circle cx="1014.71" cy="317.10" r="3"/><circle cx="1016.71" cy="317.10" r="3"/><circle cx="1018.71" cy="317.10" r="3"/><circle cx="1020.71" cy="317.10" r="3"/><circle cx="1022.71" cy="317.10" r="3"/><circle cx="1024.71" cy="317.10" r="3"/><circle cx="1026.70" cy="317.10" r="3"/><circle cx="1028.70" cy="317.10" r="3"/><circle cx="1030.70" cy="317.10" r="3"/><circle cx="1032.70" cy="317.10" r="3"/><circle cx="1034.70" cy="317.10" r="3"/><circle cx="1036.70" cy="317.10" r="3"/><circle cx="1038.70" cy="317.10" r="3"/><circle cx="1040.69" cy="316.00" r="3"/><circle cx="1042.69" cy="316.00" r="3"/><circle cx="1044.69" cy="316.00" r="3"/><circle cx="1046.69" cy="316.00" r="3"/><circle cx="1048.69" cy="316.00" r="3"/><circle cx="1050.69" cy="316.00" r="3"/><circle cx="1052.68" cy="316.00" r="3"/><circle cx="1054.68" cy="316.00" r="3"/><circle cx="1056.68" cy="316.00" r="3"/><circle cx="1058.68" cy="316.00" r="3"/><circle cx="1060.68" cy="316.00" r="3"/><circle cx="1062.68" cy="316.00" r="3"/><circle cx="1064.68" cy="316.00" r="3"/><circle cx="1066.67" cy="316.00" r="3"/><circle cx="1068.67" cy="316.00" r="3"/><circle cx="1070.67" cy="316.00" r="3"/><circle cx="1072.67" cy="316.00" r="3"/><circle cx="1074.67" cy="316.00" r="3"/><circle cx="1076.67" cy="316.00" r="3"/><circle cx="1078.66" cy="316.00" r="3"/><circle cx="1080.66" cy="316.00" r="3"/><circle cx="1082.66" cy="316.00" r="3"/><circle cx="1084.66" cy="316.00" r="3"/><circle cx="1086.66" cy="316.00" r="3"/><circle cx="1088.66" cy="316.00" r="3"/><circle cx="1090.66" cy="316.00" r="3"/><circle cx="1092.65" cy="316.00" r="3"/><circle cx="1094.65" cy="316.00" r="3"/><circle cx="1096.65" cy="316.00" r="3"/><circle cx="1098.65" cy="316.00" r="3"/><circle cx="1100.65" cy="316.00" r="3"/><circle cx="1102.65" cy="316.00" r="3"/><circle cx="1104.64" cy="316.00" r="3"/><circle cx="1106.64" cy="316.00" r="3"/><circle cx="1108.64" cy="316.00" r="3"/><circle cx="1110.64" cy="316.00" r="3"/><circle cx="1112.64" cy="316.00" r="3"/><circle cx="1114.64" cy="316.00" r="3"/><circle cx="1116.64" cy="316.00" r="3"/><circle cx="1118.63" cy="316.00" r="3"/><circle cx="1120.63" cy="316.00" r="3"/><circle cx="1122.63" cy="302.80" r="3"/><circle cx="1124.63" cy="301.90" r="3"/><circle cx="1126.63" cy="287.30" r="3"/><circle cx="1128.63" cy="287.30" r="3"/><circle cx="1130.62" cy="287.30" r="3"/><circle cx="1132.62" cy="287.30" r="3"/><circle cx="1134.62" cy="287.30" r="3"/><circle cx="1136.62" cy="287.30" r="3"/><circle cx="1138.62" cy="287.30" r="3"/><circle cx="1140.62" cy="287.30" r="3"/><circle cx="1142.62" cy="287.30" r="3"/><circle cx="1144.61" cy="287.30" r="3"/><circle cx="1146.61" cy="287.30" r="3"/><circle cx="1148.61" cy="287.30" r="3"/><circle cx="1150.61" cy="287.30" r="3"/><circle cx="1152.61" cy="287.30" r="3"/><circle cx="1154.61" cy="287.30" r="3"/><circle cx="1156.60" cy="287.30" r="3"/><circle cx="1158.60" cy="287.30" r="3"/><circle cx="1160.60" cy="287.30" r="3"/><circle cx="1162.60" cy="287.30" r="3"/><circle cx="1164.60" cy="287.30" r="3"/><circle cx="1166.60" cy="287.30" r="3"/><circle cx="1168.60" cy="287.30" r="3"/><circle cx="1170.59" cy="287.30" r="3"/><circle cx="1172.59" cy="287.30" r="3"/><circle cx="1174.59" cy="287.30" r="3"/><circle cx="1176.59" cy="287.30" r="3"/><circle cx="1178.59" cy="287.30" r="3"/><circle cx="1180.59" cy="287.30" r="3"/><circle cx="1182.58" cy="287.30" r="3"/><circle cx="1184.58" cy="287.30" r="3"/><circle cx="1186.58" cy="287.30" r="3"/><circle cx="1188.58" cy="287.30" r="3"/><circle cx="1190.58" cy="287.30" r="3"/><circle cx="1192.58" cy="287.30" r="3"/><circle cx="1194.58" cy="287.30" r="3"/><circle cx="1196.57" cy="287.30" r="3"/><circle cx="1198.57" cy="287.30" r="3"/><circle cx="1200.57" cy="287.30" r="3"/><circle cx="1202.57" cy="287.30" r="3"/><circle cx="1204.57" cy="287.30" r="3"/><circle cx="1206.57" cy="287.30" r="3"/><circle cx="1208.56" cy="287.30" r="3"/><circle cx="1210.56" cy="287.30" r="3"/><circle cx="1212.56" cy="287.30" r="3"/><circle cx="1214.56" cy="287.30" r="3"/><circle cx="1216.56" cy="287.30" r="3"/><circle cx="1218.56" cy="287.30" r="3"/><circle cx="1220.56" cy="287.30" r="3"/><circle cx="1222.55" cy="287.30" r="3"/><circle cx="1224.55" cy="287.30" r="3"/><circle cx="1226.55" cy="287.30" r="3"/><circle cx="1228.55" cy="287.30" r="3"/><circle cx="1230.55" cy="287.30" r="3"/><circle cx="1232.55" cy="287.30" r="3"/><circle cx="1234.54" cy="287.30" r="3"/><circle cx="1236.54" cy="287.30" r="3"/><circle cx="1238.54" cy="287.30" r="3"/><circle cx="1240.54" cy="287.30" r="3"/><circle cx="1242.54" cy="287.30" r="3"/><circle cx="1244.54" cy="287.30" r="3"/><circle cx="1246.54" cy="287.30" r="3"/><circle cx="1248.53" cy="287.30" r="3"/><circle cx="1250.53" cy="287.30" r="3"/><circle cx="1252.53" cy="287.30" r="3"/><circle cx="1254.53" cy="287.30" r="3"/><circle cx="1256.53" cy="287.30" r="3"/><circle cx="1258.53" cy="287.30" r="3"/><circle cx="1260.52" cy="287.30" r="3"/><circle cx="1262.52" cy="287.30" r="3"/><circle cx="1264.52" cy="287.30" r="3"/><circle cx="1266.52" cy="287.30" r="3"/><circle cx="1268.52" cy="287.30" r="3"/><circle cx="1270.52" cy="287.30" r="3"/><circle cx="1272.52" cy="287.30" r="3"/><circle cx="1274.51" cy="287.30" r="3"/><circle cx="1276.51" cy="287.30" r="3"/><circle cx="1278.51" cy="287.30" r="3"/><circle cx="1280.51" cy="287.30" r="3"/><circle cx="1282.51" cy="286.50" r="3"/><circle cx="1284.51" cy="286.50" r="3"/><circle cx="1286.50" cy="286.50" r="3"/><circle cx="1288.50" cy="286.50" r="3"/><circle cx="1290.50" cy="286.50" r="3"/><circle cx="1292.50" cy="286.50" r="3"/><circle cx="1294.50" cy="286.50" r="3"/><circle cx="1296.50" cy="286.50" r="3"/><circle cx="1298.50" cy="286.50" r="3"/><circle cx="1300.49" cy="286.50" r="3"/><circle cx="1302.49" cy="286.50" r="3"/><circle cx="1304.49" cy="286.50" r="3"/><circle cx="1306.49" cy="286.50" r="3"/><circle cx="1308.49" cy="286.50" r="3"/><circle cx="1310.49" cy="286.50" r="3"/><circle cx="1312.48" cy="286.50" r="3"/><circle cx="1314.48" cy="286.50" r="3"/><circle cx="1316.48" cy="286.50" r="3"/><circle cx="1318.48" cy="286.50" r="3"/><circle cx="1320.48" cy="286.50" r="3"/><circle cx="1322.48" cy="286.50" r="3"/><circle cx="1324.48" cy="286.50" r="3"/><circle cx="1326.47" cy="286.50" r="3"/><circle cx="1328.47" cy="286.50" r="3"/><circle cx="1330.47" cy="286.50" r="3"/><circle cx="1332.47" cy="286.50" r="3"/><circle cx="1334.47" cy="286.50" r="3"/><circle cx="1336.47" cy="286.50" r="3"/><circle cx="1338.46" cy="283.90" r="3"/><circle cx="1340.46" cy="283.90" r="3"/><circle cx="1342.46" cy="283.90" r="3"/><circle cx="1344.46" cy="283.90" r="3"/><circle cx="1346.46" cy="283.90" r="3"/><circle cx="1348.46" cy="283.90" r="3"/><circle cx="1350.46" cy="278.20" r="3"/><circle cx="1352.45" cy="278.20" r="3"/><circle cx="1354.45" cy="278.20" r="3"/><circle cx="1356.45" cy="278.20" r="3"/><circle cx="1358.45" cy="278.20" r="3"/><circle cx="1360.45" cy="278.20" r="3"/><circle cx="1362.45" cy="278.20" r="3"/><circle cx="1364.44" cy="278.20" r="3"/><circle cx="1366.44" cy="275.50" r="3"/></g>
<text transform="translate(70.34,717.3) rotate(-50)" text-anchor="end" class="tk">08 Jan 2021</text>
<text transform="translate(90.33,717.3) rotate(-50)" text-anchor="end" class="tk">18 Jan 2021</text>
<text transform="translate(110.31,717.3) rotate(-50)" text-anchor="end" class="tk">28 Jan 2021</text>
<text transform="translate(130.30,717.3) rotate(-50)" text-anchor="end" class="tk">07 Feb 2021</text>
<text transform="translate(150.28,717.3) rotate(-50)" text-anchor="end" class="tk">17 Feb 2021</text>
<text transform="translate(170.27,717.3) rotate(-50)" text-anchor="end" class="tk">27 Feb 2021</text>
<text transform="translate(190.25,717.3) rotate(-50)" text-anchor="end" class="tk">09 Mar 2021</text>
<text transform="translate(210.24,717.3) rotate(-50)" text-anchor="end" class="tk">19 Mar 2021</text>
<text transform="translate(230.22,717.3) rotate(-50)" text-anchor="end" class="tk">29 Mar 2021</text>
<text transform="translate(250.21,717.3) rotate(-50)" text-anchor="end" class="tk">08 Apr 2021</text>
<text transform="translate(270.19,717.3) rotate(-50)" text-anchor="end" class="tk">18 Apr 2021</text>
<text transform="translate(290.18,717.3) rotate(-50)" text-anchor="end" class="tk">28 Apr 2021</text>
<text transform="translate(310.16,717.3) rotate(-50)" text-anchor="end" class="tk">08 May 2021</text>
<text transform="translate(330.15,717.3) rotate(-50)" text-anchor="end" class="tk">18 May 2021</text>
<text transform="translate(350.13,717.3) rotate(-50)" text-anchor="end" class="tk">28 May 2021</text>
<text transform="translate(370.12,717.3) rotate(-50)" text-anchor="end" class="tk">07 Jun 2021</text>
<text transform="translate(390.10,717.3) rotate(-50)" text-anchor="end" class="tk">17 Jun 2021</text>
<text transform="translate(410.09,717.3) rotate(-50)" text-anchor="end" class="tk">27 Jun 2021</text>
<text transform="translate(430.07,717.3) rotate(-50)" text-anchor="end" class="tk">07 Jul 2021</text>
<text transform="translate(450.06,717.3) rotate(-50)" text-anchor="end" class="tk">17 Jul 2021</text>
<text transform="translate(470.04,717.3) rotate(-50)" text-anchor="end" class="tk">27 Jul 2021</text>
<text transform="translate(490.03,717.3) rotate(-50)" text-anchor="end" class="tk">06 Aug 2021</text>
<text transform="translate(510.01,717.3) rotate(-50)" text-anchor="end" class="tk">16 Aug 2021</text>
<text transform="translate(530.00,717.3) rotate(-50)" text-anchor="end" class="tk">26 Aug 2021</text>
<text transform="translate(549.98,717.3) rotate(-50)" text-anchor="end" class="tk">05 Sep 2021</text>
<text transform="translate(569.97,717.3) rotate(-50)" text-anchor="end" class="tk">15 Sep 2021</text>
<text transform="translate(589.95,717.3) rotate(-50)" text-anchor="end" class="tk">25 Sep 2021</text>
<text transform="translate(609.94,717.3) rotate(-50)" text-anchor="end" class="tk">05 Oct 2021</text>
<text transform="translate(629.92,717.3) rotate(-50)" text-anchor="end" class="tk">15 Oct 2021</text>
<text transform="translate(649.91,717.3) rotate(-50)" text-anchor="end" class="tk">25 Oct 2021</text>
<text transform="translate(669.89,717.3) rotate(-50)" text-anchor="end" class="tk">04 Nov 2021</text>
<text transform="translate(689.88,717.3) rotate(-50)" text-anchor="end" class="tk">14 Nov 2021</text>
<text transform="translate(709.86,717.3) rotate(-50)" text-anchor="end" class="tk">24 Nov 2021</text>
<text transform="translate(729.85,717.3) rotate(-50)" text-anchor="end" class="tk">04 Dec 2021</text>
<text transform="translate(749.83,717.3) rotate(-50)" text-anchor="end" class="tk">14 Dec 2021</text>
<text transform="translate(769.82,717.3) rotate(-50)" text-anchor="end" class="tk">24 Dec 2021</text>
<text transform="translate(789.80,717.3) rotate(-50)" text-anchor="end" class="tk">03 Jan 2022</text>
<text transform="translate(809.79,717.3) rotate(-50)" text-anchor="end" class="tk">13 Jan 2022</text>
<text transform="translate(829.77,717.3) rotate(-50)" text-anchor="end" class="tk">23 Jan 2022</text>
<text transform="translate(849.76,717.3) rotate(-50)" text-anchor="end" class="tk">02 Feb 2022</text>
<text transform="translate(869.74,717.3) rotate(-50)" text-anchor="end" class="tk">12 Feb 2022</text>
<text transform="translate(889.73,717.3) rotate(-50)" text-anchor="end" class="tk">22 Feb 2022</text>
<text transform="translate(909.71,717.3) rotate(-50)" text-anchor="end" class="tk">04 Mar 2022</text>
<text transform="translate(929.70,717.3) rotate(-50)" text-anchor="end" class="tk">14 Mar 2022</text>
<text transform="translate(949.68,717.3) rotate(-50)" text-anchor="end" class="tk">24 Mar 2022</text>
<text transform="translate(969.67,717.3) rotate(-50)" text-anchor="end" class="tk">03 Apr 2022</text>
<text transform="translate(989.65,717.3) rotate(-50)" text-anchor="end" class="tk">13 Apr 2022</text>
<text transform="translate(1009.64,717.3) rotate(-50)" text-anchor="end" class="tk">23 Apr 2022</text>
<text transform="translate(1029.62,717.3) rotate(-50)" text-anchor="end" class="tk">03 May 2022</text>
<text transform="translate(1049.61,717.3) rotate(-50)" text-anchor="end" class="tk">13 May 2022</text>
<text transform="translate(1069.59,717.3) rotate(-50)" text-anchor="end" class="tk">23 May 2022</text>
<text transform="translate(1089.58,717.3) rotate(-50)" text-anchor="end" class="tk">02 Jun 2022</text>
<text transform="translate(1109.56,717.3) rotate(-50)" text-anchor="end" class="tk">12 Jun 2022</text>
<text transform="translate(1129.55,717.3) rotate(-50)" text-anchor="end" class="tk">22 Jun 2022</text>
<text transform="translate(1149.53,717.3) rotate(-50)" text-anchor="end" class="tk">02 Jul 2022</text>
<text transform="translate(1169.52,717.3) rotate(-50)" text-anchor="end" class="tk">12 Jul 2022</text>
<text transform="translate(1189.50,717.3) rotate(-50)" text-anchor="end" class="tk">22 Jul 2022</text>
<text transform="translate(1209.49,717.3) rotate(-50)" text-anchor="end" class="tk">01 Aug 2022</text>
<text transform="translate(1229.47,717.3) rotate(-50)" text-anchor="end" class="tk">11 Aug 2022</text>
<text transform="translate(1249.46,717.3) rotate(-50)" text-anchor="end" class="tk">21 Aug 2022</text>
<text transform="translate(1269.44,717.3) rotate(-50)" text-anchor="end" class="tk">31 Aug 2022</text>
<text transform="translate(1289.43,717.3) rotate(-50)" text-anchor="end" class="tk">10 Sep 2022</text>
<text transform="translate(1309.41,717.3) rotate(-50)" text-anchor="end" class="tk">20 Sep 2022</text>
<text transform="translate(1329.40,717.3) rotate(-50)" text-anchor="end" class="tk">30 Sep 2022</text>
<text transform="translate(1349.38,717.3) rotate(-50)" text-anchor="end" class="tk">10 Oct 2022</text>
<text transform="translate(1369.37,717.3) rotate(-50)" text-anchor="end" class="tk">20 Oct 2022</text>
<rect x="631.5" y="155" width="42" height="14" fill="#1f77b4" stroke="#1f77b4" stroke-width="1"/>
<text x="678" y="164.8" class="tk">Untaxed Total</text>
<text x="716.5" y="787" text-anchor="middle" class="tk">Order Date</text>
</svg>
</body></html>
